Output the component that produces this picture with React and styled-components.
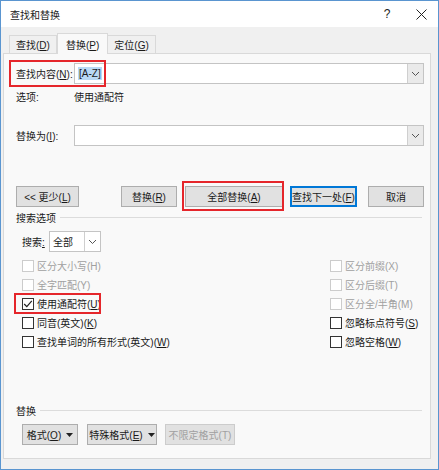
import React from "react";
import styled, { createGlobalStyle } from "styled-components";

const GlobalStyle = createGlobalStyle`
  html, body {
    margin: 0;
    padding: 0;
    background: #ffffff;
  }
  * {
    box-sizing: border-box;
  }
  body {
    font-family: "Liberation Sans", "Noto Sans CJK SC", sans-serif;
    font-size: 10px;
    color: #1a1a1a;
  }
`;

const Window = styled.div`
  width: 439px;
  height: 470px;
  border: 1px solid #5a95d0;
  background: #f0f0f0;
  display: flex;
  flex-direction: column;
`;

const TitleBar = styled.div`
  height: 26px;
  background: #ffffff;
  display: flex;
  align-items: center;
  padding-left: 9px;
  font-size: 10px;
`;

const TitleText = styled.div`
  flex: 1;
`;

const TitleButton = styled.div`
  width: 34px;
  display: flex;
  justify-content: center;
  align-items: center;
  font-size: 12px;
  color: #222;
`;

const TabStrip = styled.div`
  display: flex;
  align-items: flex-end;
  height: 26px;
  padding-left: 8px;
`;

const Tab = styled.div`
  height: ${(p) => (p.$active ? "21px" : "18px")};
  padding: 0 ${(p) => (p.$active ? "8px" : "6px")};
  display: flex;
  align-items: center;
  border: 1px solid #d9d9d9;
  border-bottom: none;
  border-left: ${(p) => (p.$first || p.$active ? "1px solid #d9d9d9" : "none")};
  background: ${(p) => (p.$active ? "#f9f9f9" : "#f0f0f0")};
  margin-bottom: ${(p) => (p.$active ? "-1px" : "0")};
  position: relative;
  z-index: ${(p) => (p.$active ? 1 : 0)};
`;

const Panel = styled.div`
  margin: 0 7px 0 2px;
  height: 406px;
  border: 1px solid #d9d9d9;
  background: #f9f9f9;
  padding: 0 4px 0 12px;
  display: flex;
  flex-direction: column;
  position: relative;
`;

const Row = styled.div`
  display: flex;
  align-items: center;
  height: ${(p) => p.$h || 21}px;
  margin-top: ${(p) => p.$mt || 0}px;
  padding-left: ${(p) => p.$indent || 0}px;
  position: relative;
`;

const Label = styled.div`
  width: ${(p) => p.$w || 58}px;
  white-space: nowrap;
`;

const U = styled.span`
  text-decoration: underline;
`;

const ComboBox = styled.div`
  width: ${(p) => p.$w}px;
  height: 21px;
  border: 1px solid #c4c4c4;
  background: #ffffff;
  display: flex;
  align-items: center;
  padding-left: 2px;
`;

const ComboValue = styled.div`
  flex: 1;
  padding-left: 1px;
`;

const Selected = styled.span`
  background: #b9d9f5;
  padding: 1px 1px;
`;

const DropButton = styled.div`
  width: 16px;
  height: 19px;
  border-left: 1px solid #cfcfcf;
  background: ${(p) => (p.$plain ? "#ffffff" : "#eaeaea")};
  display: flex;
  align-items: center;
  justify-content: center;
`;

const Button = styled.div`
  width: ${(p) => p.$w}px;
  height: 21px;
  margin-left: ${(p) => p.$ml || 0}px;
  border: 1px solid ${(p) => (p.$disabled ? "#cccccc" : p.$default ? "#0078d7" : "#adadad")};
  box-shadow: ${(p) => (p.$default ? "inset 0 0 0 1px #0078d7" : "none")};
  background: #e1e1e1;
  color: ${(p) => (p.$disabled ? "#a0a0a0" : "#1a1a1a")};
  display: flex;
  align-items: center;
  justify-content: center;
  white-space: nowrap;
`;

const CaretBox = styled.span`
  display: inline-flex;
  margin-left: 5px;
`;

const GroupHeader = styled.div`
  display: flex;
  align-items: center;
  height: 14px;
  margin-top: ${(p) => p.$mt}px;
  margin-right: 4px;
  gap: 4px;
  white-space: nowrap;
`;

const GroupLine = styled.div`
  flex: 1;
  height: 1px;
  background: #dcdcdc;
`;

const OptionGrid = styled.div`
  display: grid;
  grid-template-columns: 308px 1fr;
  grid-auto-rows: 19px;
  margin-top: 4px;
  padding-left: 6px;
`;

const Check = styled.div`
  display: flex;
  align-items: center;
  gap: 3px;
  color: ${(p) => (p.$disabled ? "#a0a0a0" : "#1a1a1a")};
  white-space: nowrap;
  position: relative;
`;

const Box = styled.div`
  width: 12px;
  height: 12px;
  border: 1px solid ${(p) => (p.$disabled ? "#cccccc" : "#333333")};
  background: #ffffff;
  display: flex;
  align-items: center;
  justify-content: center;
`;

const Highlight = styled.div`
  position: absolute;
  border: 2px solid #e5262b;
  pointer-events: none;
  left: ${(p) => p.$l}px;
  top: ${(p) => p.$t}px;
  width: ${(p) => p.$w}px;
  height: ${(p) => p.$h}px;
`;

const Chevron = () => (
  <svg width="9" height="6" viewBox="0 0 9 6">
    <path d="M1 1 L4.5 4.5 L8 1" fill="none" stroke="#555" strokeWidth="1" />
  </svg>
);

const Caret = () => (
  <CaretBox>
    <svg width="7" height="4" viewBox="0 0 7 4">
      <path d="M0 0 L7 0 L3.5 4 Z" fill="#222" />
    </svg>
  </CaretBox>
);

const CheckMark = () => (
  <svg width="10" height="10" viewBox="0 0 10 10">
    <path d="M1.2 5 L3.8 7.6 L8.8 1.8" fill="none" stroke="#222" strokeWidth="1.2" />
  </svg>
);

function Option({ label, disabled, checked, children }) {
  return (
    <Check $disabled={disabled}>
      <Box $disabled={disabled}>{checked && <CheckMark />}</Box>
      <span>{label}</span>
      {children}
    </Check>
  );
}

export default function App() {
  return (
    <>
      <GlobalStyle />
      <Window>
        <TitleBar>
          <TitleText>查找和替换</TitleText>
          <TitleButton>?</TitleButton>
          <TitleButton>
            <svg width="11" height="11" viewBox="0 0 11 11">
              <path d="M0.5 0.5 L10.5 10.5 M10.5 0.5 L0.5 10.5" stroke="#222" strokeWidth="1" />
            </svg>
          </TitleButton>
        </TitleBar>
        <TabStrip>
          <Tab $first>
            <span>
              查找(<U>D</U>)
            </span>
          </Tab>
          <Tab $active>
            <span>
              替换(<U>P</U>)
            </span>
          </Tab>
          <Tab>
            <span>
              定位(<U>G</U>)
            </span>
          </Tab>
        </TabStrip>
        <Panel>
          <Row $mt={9}>
            <Label>
              查找内容(<U>N</U>):
            </Label>
            <ComboBox $w={350}>
              <ComboValue>
                <Selected>[A-Z]</Selected>
              </ComboValue>
              <DropButton>
                <Chevron />
              </DropButton>
            </ComboBox>
            <Highlight $l={-7} $t={-3} $w={97} $h={27} />
          </Row>
          <Row $mt={4} $h={16}>
            <Label>选项:</Label>
            <span>使用通配符</span>
          </Row>
          <Row $mt={21}>
            <Label>
              替换为(<U>I</U>):
            </Label>
            <ComboBox $w={350}>
              <ComboValue />
              <DropButton>
                <Chevron />
              </DropButton>
            </ComboBox>
          </Row>
          <Row $mt={40} $indent={-1}>
            <Button $w={63}>
              <span>
                &lt;&lt; 更少(<U>L</U>)
              </span>
            </Button>
            <Button $w={56} $ml={42}>
              <span>
                替换(<U>R</U>)
              </span>
            </Button>
            <Button $w={98} $ml={8}>
              <span>
                全部替换(<U>A</U>)
              </span>
            </Button>
            <Button $w={67} $ml={7} $default>
              <span>
                查找下一处(<U>F</U>)
              </span>
            </Button>
            <Button $w={56} $ml={11}>
              <span>取消</span>
            </Button>
            <Highlight $l={166} $t={-5} $w={102} $h={30} />
          </Row>
          <GroupHeader $mt={3}>
            <span>搜索选项</span>
            <GroupLine />
          </GroupHeader>
          <Row $mt={7} $indent={6}>
            <Label $w={27}>
              搜索<U>:</U>
            </Label>
            <ComboBox $w={52}>
              <ComboValue>全部</ComboValue>
              <DropButton $plain>
                <Chevron />
              </DropButton>
            </ComboBox>
          </Row>
          <OptionGrid>
            <Option label="区分大小写(H)" disabled />
            <Option label="区分前缀(X)" disabled />
            <Option label="全字匹配(Y)" disabled />
            <Option label="区分后缀(T)" disabled />
            <Option
              label={
                <>
                  使用通配符(<U>U</U>)
                </>
              }
              checked
            >
              <Highlight $l={-8} $t={-1} $w={87} $h={21} />
            </Option>
            <Option label="区分全/半角(M)" disabled />
            <Option
              label={
                <>
                  同音(英文)(<U>K</U>)
                </>
              }
            />
            <Option
              label={
                <>
                  忽略标点符号(<U>S</U>)
                </>
              }
            />
            <Option
              label={
                <>
                  查找单词的所有形式(英文)(<U>W</U>)
                </>
              }
            />
            <Option
              label={
                <>
                  忽略空格(<U>W</U>)
                </>
              }
            />
          </OptionGrid>
          <GroupHeader $mt={52}>
            <span>替换</span>
            <GroupLine />
          </GroupHeader>
          <Row $mt={7} $indent={6}>
            <Button $w={56}>
              <span>
                格式(<U>O</U>)
              </span>
              <Caret />
            </Button>
            <Button $w={70} $ml={9}>
              <span>
                特殊格式(<U>E</U>)
              </span>
              <Caret />
            </Button>
            <Button $w={70} $ml={8} $disabled>
              <span>不限定格式(T)</span>
            </Button>
          </Row>
        </Panel>
      </Window>
    </>
  );
}
